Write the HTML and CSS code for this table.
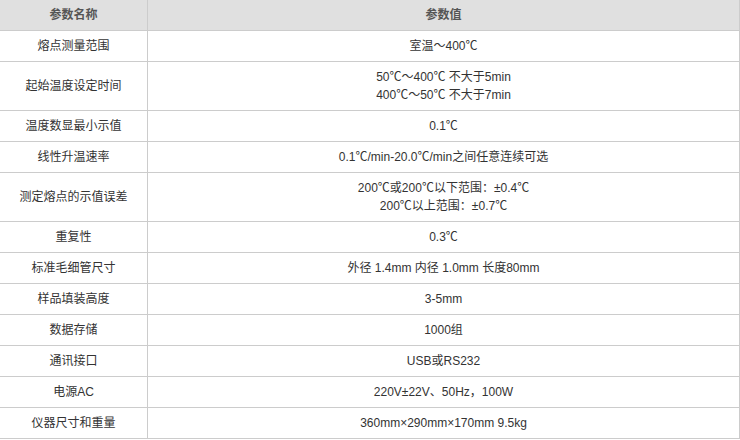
FILE: index.html
```html
<!DOCTYPE html>
<html lang="zh-CN">
<head>
<meta charset="utf-8">
<title>参数表</title>
<link rel="stylesheet" href="styles.css">
</head>
<body>
<table class="spec">
  <colgroup><col class="c-name"><col class="c-val"></colgroup>
  <thead>
    <tr><th>参数名称</th><th>参数值</th></tr>
  </thead>
  <tbody>
    <tr><td>熔点测量范围</td><td>室温～400℃</td></tr>
    <tr><td>起始温度设定时间</td><td>50℃～400℃ 不大于5min<br>400℃～50℃ 不大于7min</td></tr>
    <tr><td>温度数显最小示值</td><td>0.1℃</td></tr>
    <tr><td>线性升温速率</td><td>0.1℃/min-20.0℃/min之间任意连续可选</td></tr>
    <tr><td>测定熔点的示值误差</td><td>200℃或200℃以下范围：±0.4℃<br>200℃以上范围：±0.7℃</td></tr>
    <tr><td>重复性</td><td>0.3℃</td></tr>
    <tr><td>标准毛细管尺寸</td><td>外径 1.4mm 内径 1.0mm 长度80mm</td></tr>
    <tr><td>样品填装高度</td><td>3-5mm</td></tr>
    <tr><td>数据存储</td><td>1000组</td></tr>
    <tr><td>通讯接口</td><td>USB或RS232</td></tr>
    <tr><td>电源AC</td><td>220V±22V、50Hz，100W</td></tr>
    <tr><td>仪器尺寸和重量</td><td>360mm×290mm×170mm 9.5kg</td></tr>
  </tbody>
</table>
</body>
</html>
```
FILE: styles.css
```css
html, body {
  margin: 0;
  padding: 0;
  background: #ffffff;
}
.spec {
  width: 740px;
  border-collapse: separate;
  border-spacing: 0;
  table-layout: fixed;
  font-family: "Liberation Sans", "Noto Sans CJK SC", sans-serif;
  font-size: 12px;
  line-height: 18px;
  color: #333333;
}
.c-name { width: 148px; }
.c-val { width: 592px; }
.spec th,
.spec td {
  padding: 6px 0;
  text-align: center;
  vertical-align: middle;
  border-right: 1px solid #cccccc;
  border-bottom: 1px solid #cccccc;
}
.spec th {
  background: #e0e0e0;
  font-weight: bold;
  color: #555555;
}
```
